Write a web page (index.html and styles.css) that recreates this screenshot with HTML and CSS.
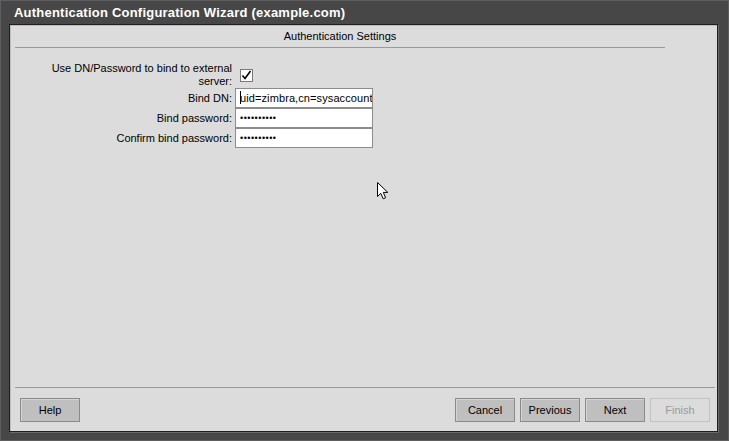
FILE: index.html
```html
<!DOCTYPE html>
<html>
<head>
<meta charset="utf-8">
<link rel="stylesheet" href="styles.css">
</head>
<body>
<div class="window">
  <div class="titlebar">Authentication Configuration Wizard (example.com)</div>
  <div class="panel">
    <div class="section-head">Authentication Settings</div>
    <div class="form">
      <div class="label two-line">Use DN/Password to bind to external server:</div>
      <div class="field"><span class="checkbox"><svg width="11" height="11" viewBox="0 0 11 11"><path d="M1.5 5.5 L4 8.5 L9.5 1" fill="none" stroke="#000" stroke-width="1.6"/></svg></span></div>
      <div class="label">Bind DN:</div>
      <div class="field"><div class="input"><span class="caret"></span>uid=zimbra,cn=sysaccounts,cn=zimbra</div></div>
      <div class="label">Bind password:</div>
      <div class="field"><div class="input pw">••••••••••</div></div>
      <div class="label">Confirm bind password:</div>
      <div class="field"><div class="input pw">••••••••••</div></div>
    </div>
    <div class="spacer"></div>
    <div class="footer">
      <button class="btn">Help</button>
      <div class="btn-group">
        <button class="btn">Cancel</button>
        <button class="btn">Previous</button>
        <button class="btn">Next</button>
        <button class="btn disabled">Finish</button>
      </div>
    </div>
  </div>
  <svg class="cursor" width="14" height="20" viewBox="0 0 14 20"><path d="M1.5 1.5 L1.5 15.5 L4.8 12.3 L7.2 17.8 L9.6 16.8 L7.3 11.4 L11.8 11.4 Z" fill="#fff" stroke="#000" stroke-width="1" stroke-linejoin="miter"/></svg>
</div>
</body>
</html>
```
FILE: styles.css
```css
html, body {
  margin: 0;
  padding: 0;
  background: #474747;
}
.window {
  position: relative;
  box-sizing: border-box;
  width: 729px;
  height: 441px;
  background: #474747;
  border: 1px solid #5e5e5e;
  padding: 0 10px 8px 8px;
  display: flex;
  flex-direction: column;
  font-family: "Liberation Sans", Arial, sans-serif;
  font-size: 11px;
  color: #000;
}
.titlebar {
  height: 23px;
  line-height: 24px;
  padding-left: 5px;
  color: #fff;
  font-weight: bold;
  font-size: 13px;
  letter-spacing: 0.22px;
}
.panel {
  box-sizing: border-box;
  width: 709px;
  height: 408px;
  background: #dcdcdc;
  border: 1px solid #1e1e1e;
  box-shadow: 1px 1px 0 #6a6a6a, inset 1px 1px 0 #bdbdbd;
  display: flex;
  flex-direction: column;
}
.section-head {
  margin-left: 5px;
  width: 650px;
  height: 22px;
  line-height: 22px;
  text-align: center;
  border-bottom: 1px solid #9a9a9a;
}
.form {
  display: grid;
  grid-template-columns: 185px 138px;
  column-gap: 3px;
  margin-left: 37px;
  margin-top: 14px;
}
.label {
  text-align: right;
  align-self: center;
  line-height: 13px;
}
.two-line {
  height: 26px;
}
.field {
  display: flex;
  align-items: center;
}
.checkbox {
  box-sizing: border-box;
  width: 13px;
  height: 13px;
  margin-left: 5px;
  background: #fff;
  border: 1px solid #7a7a7a;
  display: flex;
  align-items: center;
  justify-content: center;
}
.input {
  box-sizing: border-box;
  width: 138px;
  height: 20px;
  background: #fff;
  border: 1px solid #8c8c8c;
  padding-left: 4px;
  line-height: 18px;
  white-space: nowrap;
  overflow: hidden;
  font-size: 11px;
  letter-spacing: 0.1px;
}
.caret {
  display: inline-block;
  width: 1px;
  height: 13px;
  background: #000;
  vertical-align: -2px;
  margin-right: -1px;
}
.pw {
  font-size: 9px;
  letter-spacing: 0.5px;
  padding-left: 4px;
}
.spacer {
  flex: 1;
}
.footer {
  margin-left: 5px;
  margin-right: 2px;
  border-top: 1px solid #9a9a9a;
  padding: 10px 5px 9px 5px;
  display: flex;
  justify-content: space-between;
}
.btn-group {
  display: flex;
  gap: 5px;
}
.btn {
  box-sizing: border-box;
  width: 60px;
  height: 24px;
  margin: 0;
  padding: 0;
  font-family: "Liberation Sans", Arial, sans-serif;
  font-size: 11px;
  color: #000;
  background: #bfbfbf;
  border: 1px solid #8a8a8a;
  box-shadow: inset 1px 1px 0 #d4d4d4;
}
.btn.disabled {
  background: #dcdcdc;
  border-color: #c2c2c2;
  box-shadow: none;
  color: #9a9a9a;
}
.cursor {
  position: absolute;
  left: 375px;
  top: 180px;
}
```
